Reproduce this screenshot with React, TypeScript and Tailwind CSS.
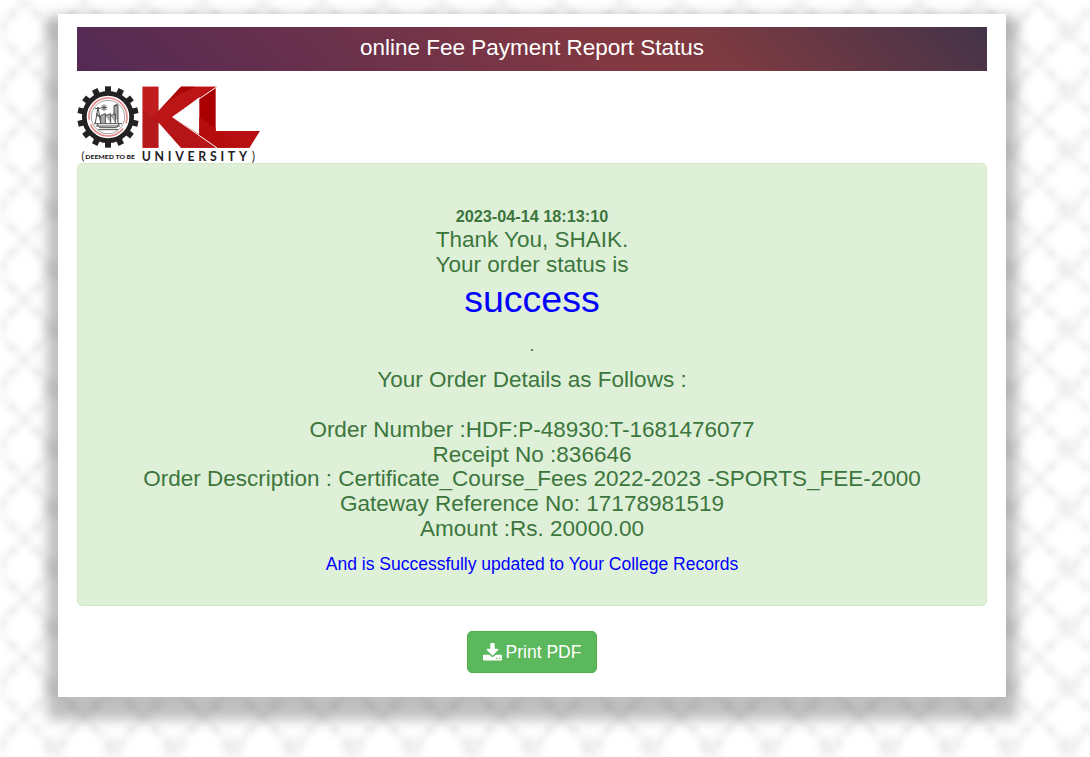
import React from "react";

const TEETH = Array.from({ length: 14 }, (_, i) => (i * 360) / 14);

function WovenTexture() {
  return (
    <svg className="absolute inset-0 h-full w-full" aria-hidden="true">
      <defs>
        <filter id="soft" x="0" y="0" width="100%" height="100%">
          <feGaussianBlur stdDeviation="3" />
        </filter>
        <pattern id="weave" width="59.65" height="59.65" patternUnits="userSpaceOnUse" patternTransform="translate(-5.4 31.7)">
          <g fill="#eaeaea">
            <path d="M0 0H10V-10ZM0 0V8L8 8Z" />
            <path d="M59.65 0H50L59.65 10Z" />
            <path d="M0 59.65H12L12 48Z" />
            <path d="M59.65 59.65H46L59.65 46Z" />
          </g>
          <g fill="#e3e3e3">
            <rect x="26.3" y="26.3" width="7" height="7" />
            <rect x="14.3" y="14.3" width="7" height="7" />
            <rect x="38.3" y="14.3" width="7" height="7" />
            <rect x="14.3" y="38.3" width="7" height="7" />
            <rect x="38.3" y="38.3" width="7" height="7" />
          </g>
          <path d="M0 0L59.65 59.65M59.65 0L0 59.65" stroke="#eeeeee" strokeWidth="7" opacity=".55" />
        </pattern>
      </defs>
      <rect width="100%" height="100%" fill="url(#weave)" filter="url(#soft)" />
    </svg>
  );
}

function Logo() {
  return (
    <svg className="block h-[78px] w-[183px]" viewBox="21 21 549 234" role="img" aria-label="KL University">
      <g transform="translate(114 117)">
        {TEETH.map((a) => (
          <rect key={a} x="-9" y="-92" width="18" height="22" fill="#242122" transform={`rotate(${a})`} />
        ))}
        <circle r="71" fill="#fff" stroke="#242122" strokeWidth="14" />
        <circle r="57" fill="none" stroke="#e58a8e" strokeWidth="5" strokeDasharray="205 18 118 17" transform="rotate(172)" />
        <circle r="50" fill="#fff" stroke="#777" strokeWidth="2" />
        <g fill="none" stroke="#4d4d4d" strokeWidth="3">
          <path d="M-38 18L-30 -30L-22 18M-40 -26H-22M-36 -4H-25M-34 -12L-24 4" />
          <path d="M-12 -38V-18M-22 -28H-2M-19 -35L-5 -21M-5 -35L-19 -21" />
          <path fill="#aaa" d="M-22 18V-4L-8 -10V18M-8 -4L8 -10V18M8 -4L22 -10V18M18 -8V-34H30V18M18 -34L30 -39" />
          <path d="M-42 20H42M-36 27H36M-29 38H30M-33 20L-25 32H26L34 20" />
        </g>
      </g>
      <path d="M218 26H265V100L333 26H441L360 101L438 209H333L265 133V209H218Z" fill="#b80f12" />
      <path d="M218 26H265V100L250 117L218 96Z" fill="#c11c1e" />
      <path d="M218 96L250 117L265 133V209H218Z" fill="#b5191b" />
      <path d="M250 117L265 100L333 26H441L388 60L308 117L282 148L265 133Z" fill="#bb1517" />
      <path d="M265 100L333 26H375L303 62Z" fill="#a90406" />
      <path d="M308 117L360 155L438 209H333L282 151Z" fill="#b61517" />
      <path d="M308 117L389 57V170Z" fill="#fff" />
      <path d="M388 60L437 28V159H569L538 209H441L388 171Z" fill="#ab0003" />
      <path d="M388 118L437 150V159H475L496 209H441L388 171Z" fill="#b50c0e" />
      <path d="M437 159H569L538 209H495L477 176Z" fill="#b80f12" />
      <path d="M308 117L441 26M308 117L440 209" stroke="#fff" strokeWidth="3" fill="none" />
      <g fill="#242223" fontFamily="Lato, 'Liberation Sans', sans-serif">
        <text x="34" y="247" fontSize="36" fill="#333">(</text>
        <text x="46" y="242" fontSize="19" fontWeight="900" textLength="149" lengthAdjust="spacingAndGlyphs">DEEMED TO BE</text>
        <text x="215" y="249" fontSize="37" fontWeight="700" textLength="316">UNIVERSITY</text>
        <text x="545" y="248" fontSize="38" fill="#333">)</text>
      </g>
    </svg>
  );
}

function DownloadIcon() {
  return (
    <svg className="h-[19px] w-[19px]" viewBox="64 0 1664 1664" fill="currentColor" aria-hidden="true">
      <path d="M1344 1344q0-26-19-45t-45-19-45 19-19 45 19 45 45 19 45-19 19-45zm256 0q0-26-19-45t-45-19-45 19-19 45 19 45 45 19 45-19 19-45zm128-224v320q0 40-28 68t-68 28h-1472q-40 0-68-28t-28-68v-320q0-40 28-68t68-28h465l135 136q58 56 136 56t136-56l136-136h464q40 0 68 28t28 68zm-325-569q17 41-14 70l-448 448q-18 19-45 19t-45-19l-448-448q-31-29-14-70 17-39 59-39h256v-448q0-26 19-45t45-19h256q26 0 45 19t19 45v448h256q42 0 59 39z" />
    </svg>
  );
}

export default function App() {
  return (
    <div className="relative h-[757px] w-full overflow-hidden bg-white font-['Liberation_Sans',Arial,sans-serif]">
      <WovenTexture />
      <main className="relative ml-[58px] mt-[14px] flex h-[683px] w-[948px] flex-col bg-white px-[19px] pt-[13px] shadow-[0_12px_12px_11px_rgba(0,0,0,0.25)]">
        <header className="flex h-11 shrink-0 items-center justify-center bg-[linear-gradient(45deg,#532a55_0%,#843941_60%,#7c3a41_70%,#433349_100%)] pb-[2px] text-[22.5px] text-white">
          online Fee Payment Report Status
        </header>
        <div className="mt-[14px]">
          <Logo />
        </div>
        <section className="flex h-[443px] shrink-0 flex-col items-center rounded-[5px] border border-[#d6e9c6] bg-[#dff0d8] pt-[40px] text-center text-[22.5px] leading-[24.75px] text-[#3c763d]">
          <strong className="text-[16.25px] leading-6">2023-04-14 18:13:10</strong>
          <p>Thank You, SHAIK.</p>
          <p>Your order status is</p>
          <p className="mt-px text-[37.5px] leading-[41px] text-[#0000ff]">success</p>
          <p className="mt-[13px] text-[17.5px] leading-[25px]">.</p>
          <p className="mt-[10.5px]">Your Order Details as Follows :</p>
          <div className="mt-[25px]">
            <p>Order Number :HDF:P-48930:T-1681476077</p>
            <p>Receipt No :836646</p>
            <p>Order Description : Certificate_Course_Fees 2022-2023 -SPORTS_FEE-2000</p>
            <p>Gateway Reference No: 17178981519</p>
            <p>Amount :Rs. 20000.00</p>
          </div>
          <p className="mt-[10.5px] text-[17.5px] text-[#0000ff]">And is Successfully updated to Your College Records</p>
        </section>
        <button className="mt-[25px] flex h-[42px] w-[130px] shrink-0 items-center justify-center gap-1 self-center rounded-[5px] border border-[#4cae4c] bg-[#5cb85c] text-[17.5px] text-white">
          <DownloadIcon />
          Print PDF
        </button>
      </main>
    </div>
  );
}
